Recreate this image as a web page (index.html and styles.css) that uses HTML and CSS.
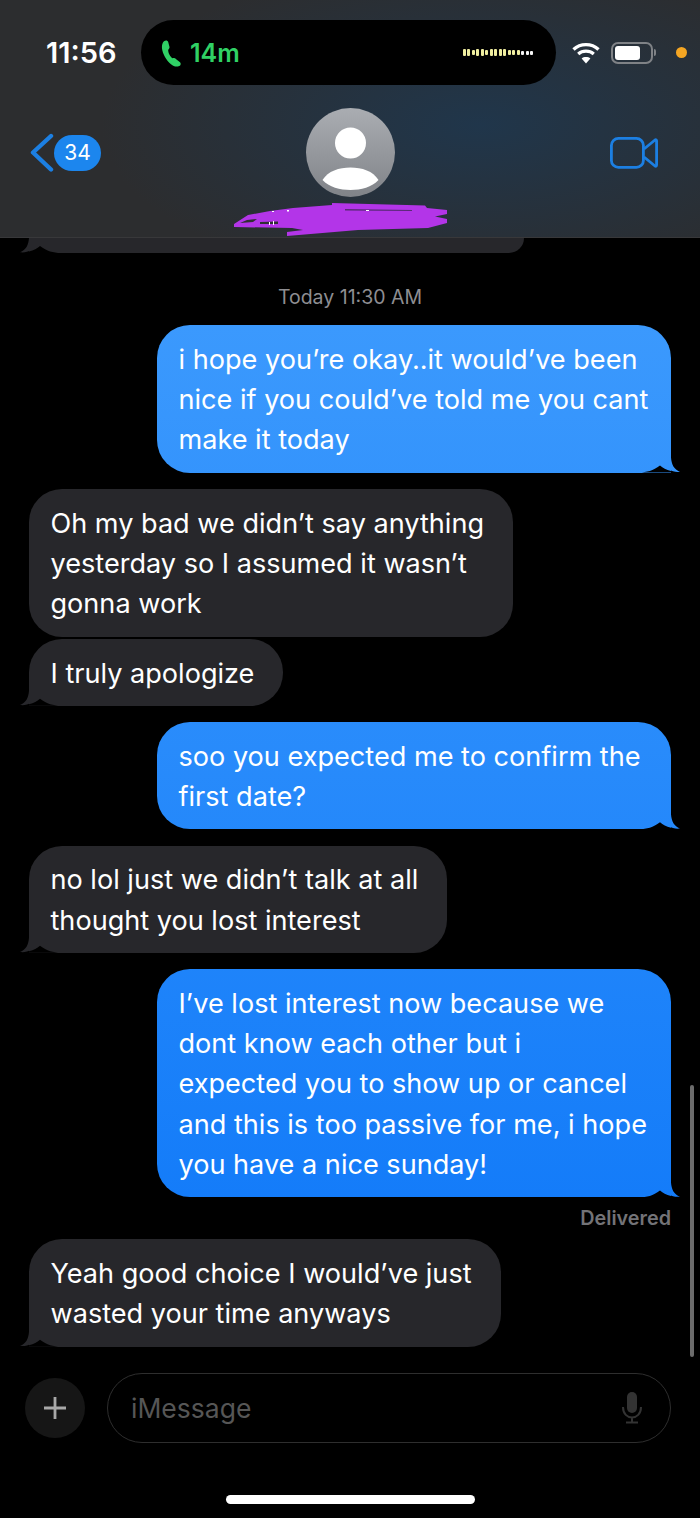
FILE: index.html
```html
<!DOCTYPE html>
<html lang="en">
<head>
  <meta charset="UTF-8">
  <title>Messages</title>
  <link rel="stylesheet" href="styles.css">
</head>
<body>

  <!-- Header -->
  <div class="header">
    <div class="status-bar">
      <div class="clock">11:56</div>
      <div class="island">
        <svg class="phone-icon" width="22" height="28" viewBox="0 0 22 28">
          <path d="M3 2.2 C4.6 1 6.6 1.2 7.2 3 L8.4 7.4 C8.8 8.8 8.2 9.8 7.2 10.8 C7 13.6 9.2 17.8 11.6 19.2 C13 18.8 14.2 19 15.2 20.2 L19 23.2 C20.2 24.6 19.8 26.2 18.2 27 C15.4 28.2 12.6 27.4 10 25.2 C5.4 21.4 1.6 14.6 1 9.4 C0.7 6.4 1.4 3.6 3 2.2 Z" fill="#30d165"/>
        </svg>
        <span class="call-time">14m</span>
        <div class="wave">
          <i class="tall"></i><i class="tall"></i><i></i><i class="tall"></i><i class="tall"></i><i></i><i class="tall"></i><i class="tall"></i><i class="tall"></i><i class="tall"></i><i></i><i></i><i></i><i class="dot"></i><i class="dot"></i><i class="dot"></i>
        </div>
      </div>
      <svg class="wifi" width="28" height="22" viewBox="0 0 28 22">
        <path d="M1.5 7.5 C8.5 1 19.5 1 26.5 7.5" fill="none" stroke="#fff" stroke-width="3.4"/>
        <path d="M6.2 12 C10.6 8.2 17.4 8.2 21.8 12" fill="none" stroke="#fff" stroke-width="3.2"/>
        <path d="M14 21.5 L9.6 16.4 C12 14.6 16 14.6 18.4 16.4 Z" fill="#fff"/>
      </svg>
      <div class="battery"><div class="battery-level"></div></div>
      <div class="battery-nub"></div>
      <div class="mic-dot"></div>
    </div>

    <div class="nav">
      <div class="back">
        <svg width="24" height="40" viewBox="0 0 24 40">
          <path d="M21 3 L3 19.5 L21 36.5" fill="none" stroke="#1c7fe2" stroke-width="4.4" stroke-linecap="round" stroke-linejoin="round"/>
        </svg>
        <div class="badge">34</div>
      </div>
      <svg class="avatar" width="89" height="89" viewBox="0 0 89 89">
        <defs>
          <linearGradient id="avatarBg" x1="0" y1="0" x2="0" y2="1">
            <stop offset="0" stop-color="#aaadb2"/>
            <stop offset="1" stop-color="#808388"/>
          </linearGradient>
        </defs>
        <circle cx="44.500" cy="44.500" r="44.500" fill="url(#avatarBg)"/>
        <circle cx="44.500" cy="35" r="15.500" fill="#fff"/>
        <path d="M16.500 72 C22 63 33 59.500 44.500 59.500 C56 59.500 67 63 72.500 72 C66 79 55 82 44.500 82 C34 82 23 79 16.500 72 Z" fill="#fff"/>
      </svg>
      <svg class="video" width="48" height="32" viewBox="0 0 48 32">
        <rect x="1.400" y="1.400" width="32" height="29" rx="7" fill="none" stroke="#1c7fe2" stroke-width="2.800"/>
        <path d="M34 12 L45 3 C46 2.400 46.600 3 46.600 4 L46.600 28 C46.600 29 46 29.600 45 29 L34 20" fill="none" stroke="#1c7fe2" stroke-width="2.800" stroke-linejoin="round"/>
      </svg>
    </div>

    <!-- scribble over the contact name -->
    <svg class="scribble" width="216" height="34" viewBox="0 0 216 34">
      <path d="M1 21 L15 12 L37 8 L60 5 L99 2 L99 0 L192 2.500 L194 5 L214 7 L214 11 L202 13.500 L214 16 L214 20 L195 25 L125 27 L54 33 L54 29 L70 27 L59 25 L1 24 Z" fill="#b335e8"/>
      <path d="M7 20 L14 17 L24 16 L20 19 Z M27 19 L45 18.500 L45 21 L27 21 Z" fill="#2f2f33"/>
      <path d="M112 6 L179 7 L179 8 L112 7.500 Z" fill="#5a2a78"/>
      <path d="M36 19 h1 v3 h-1 Z M40 18 h1 v4 h-1 Z M39 8 h2 v1 h-2 Z M54 7 h2 v1.500 h-2 Z M133 7 h3 v1 h-3 Z" fill="#fff"/>
    </svg>
  </div>

  <div class="thread">
    <div class="bubble gray tail stub"></div>

    <div class="stamp">Today 11:30 AM</div>

    <div class="bubble blue tail">i hope you’re okay..it would’ve been<br>nice if you could’ve told me you cant<br>make it today</div>

    <div class="bubble gray next-group">Oh my bad we didn’t say anything<br>yesterday so I assumed it wasn’t<br>gonna work</div>
    <div class="bubble gray tail same-group">I truly apologize</div>

    <div class="bubble blue tail next-group">soo you expected me to confirm the<br>first date?</div>

    <div class="bubble gray tail next-group">no lol just we didn’t talk at all<br>thought you lost interest</div>

    <div class="bubble blue tail next-group">I’ve lost interest now because we<br>dont know each other but i<br>expected you to show up or cancel<br>and this is too passive for me, i hope<br>you have a nice sunday!</div>
    <div class="delivered">Delivered</div>

    <div class="bubble gray tail">Yeah good choice I would’ve just<br>wasted your time anyways</div>
  </div>

  <div class="scrollbar"></div>

  <div class="composer">
    <div class="plus-btn">
      <svg width="26" height="26" viewBox="0 0 26 26">
        <path d="M13 2 V24 M2 13 H24" stroke="#a8a8a8" stroke-width="2.800"/>
      </svg>
    </div>
    <div class="input-box">
      <span class="placeholder">iMessage</span>
      <svg width="22" height="32" viewBox="0 0 22 32">
        <rect x="6" y="0" width="10" height="21" rx="5" fill="#333"/>
        <path d="M2 15 C2 29 20 29 20 15 M11 25 V30 M5 30.500 H17" fill="none" stroke="#333" stroke-width="2"/>
      </svg>
    </div>
  </div>

  <div class="home-bar"></div>

</body>
</html>
```

FILE: styles.css
```css
* {
  margin: 0;
  padding: 0;
  box-sizing: border-box;
}

html, body {
  height: 1518px;
  overflow: hidden;
}

body {
  font-family: 'Inter', 'Liberation Sans', sans-serif;
  background-color: #000;
  color: #fff;
  position: relative;
}

/* Header */
.header {
  height: 238px;
  padding-top: 20px;
  background:
    radial-gradient(ellipse 380px 165px at 480px 125px, #20364b 0%, rgba(32, 54, 75, 0) 100%),
    #2c2d2f;
  border-bottom: 1px solid #38383a;
}

.status-bar {
  display: flex;
  align-items: center;
  height: 65px;
  padding-left: 46px;
}

.clock {
  width: 95px;
  font-size: 29px;
  font-weight: 600;
}

.island {
  width: 415px;
  height: 65px;
  margin-right: 16px;
  padding: 0 23px 0 20px;
  display: flex;
  align-items: center;
  background-color: #000;
  border-radius: 33px;
}

.call-time {
  margin-left: 7px;
  font-size: 25px;
  font-weight: 600;
  color: #30d165;
}

.wave {
  margin-left: auto;
  display: flex;
  align-items: center;
  gap: 1.500px;
}

.wave i {
  display: block;
  width: 3px;
  height: 5px;
  background-color: #f0eea0;
  border-radius: 1px;
}

.wave .tall {
  height: 7px;
}

.wave .dot {
  height: 4px;
  background-color: #f4f4f4;
}

.wifi {
  margin-right: 11px;
}

.battery {
  width: 42px;
  height: 22px;
  padding: 2px;
  border: 2px solid #7f8286;
  border-radius: 7px;
}

.battery-level {
  width: 25px;
  height: 14px;
  background-color: #fff;
  border-radius: 3px;
}

.battery-nub {
  width: 2px;
  height: 7px;
  margin-left: 1px;
  background-color: #7f8286;
  border-radius: 0 2px 2px 0;
}

.mic-dot {
  width: 11px;
  height: 11px;
  margin-left: 20px;
  background-color: #f5a623;
  border-radius: 50%;
}

.nav {
  display: grid;
  grid-template-columns: 1fr auto 1fr;
  align-items: center;
  margin-top: 23px;
  padding: 0 30px;
}

.back {
  display: flex;
  align-items: center;
}

.badge {
  width: 47px;
  height: 36px;
  line-height: 36px;
  text-align: center;
  font-size: 21px;
  background-color: #1c86ee;
  border-radius: 18px;
}

.avatar {
  display: block;
}

.video {
  justify-self: end;
  margin-right: 12px;
}

.scribble {
  display: block;
  margin: 6px 0 0 233px;
}

/* Messages */
.thread {
  display: flex;
  flex-direction: column;
  padding: 0 29px;
}

.bubble {
  position: relative;
  padding: 14.600px 29px 11.800px 21.500px;
  font-size: 27.100px;
  line-height: 40.400px;
  border-radius: 33px;
  white-space: nowrap;
}

.gray {
  align-self: flex-start;
  background-color: #27272b;
}

.blue {
  align-self: flex-end;
  width: 514px;
  background-image: linear-gradient(#3b99fd 325px, #147cf9 1198px);
  background-attachment: fixed;
}

.next-group {
  margin-top: 16.300px;
}

.same-group {
  margin-top: 2.400px;
}

.stub {
  width: 495px;
  height: 15px;
  padding: 0;
  border-radius: 0 0 33px 33px;
}

.stamp {
  margin: 32px 0 16px;
  text-align: center;
  font-size: 19.500px;
  line-height: 24px;
  color: #8e8e92;
}

.delivered {
  margin: 9px 0 9px;
  text-align: right;
  font-size: 19.800px;
  font-weight: 600;
  line-height: 24px;
  color: #737377;
}

/* tail tip and the bite under its curve */
.tail::before,
.tail::after {
  content: '';
  position: absolute;
  bottom: 0;
}

.blue.tail {
  border-bottom-right-radius: 0;
}

.blue.tail::before {
  right: -10px;
  width: 12px;
  height: 15px;
  background: inherit;
  clip-path: path('M0 0 L2 0 C2.500 7 5 12 11 14.300 C7 14.800 3 14 0 12 Z');
}

.blue.tail::after {
  right: 0;
  width: 32px;
  height: 8px;
  background-color: #000;
  clip-path: path('M0 8 C8 8 14 6 21 1 C24 3.500 27 5.500 32 6.500 L32 8 Z');
}

.gray.tail {
  border-bottom-left-radius: 0;
}

.gray.tail::before {
  left: -10px;
  width: 12px;
  height: 15px;
  background: inherit;
  clip-path: path('M12 0 L10 0 C9.500 7 7 12 1 14.300 C5 14.800 9 14 12 12 Z');
}

.gray.tail::after {
  left: 0;
  width: 32px;
  height: 8px;
  background-color: #000;
  clip-path: path('M32 8 C24 8 18 6 11 1 C8 3.500 5 5.500 0 6.500 L0 8 Z');
}

.scrollbar {
  position: absolute;
  top: 1085px;
  left: 690px;
  width: 4px;
  height: 272px;
  background-color: #6c6c6c;
  border-radius: 2px;
}

/* Composer */
.composer {
  display: flex;
  align-items: center;
  gap: 22px;
  margin-top: 26px;
  padding: 0 29px 0 25px;
}

.plus-btn {
  width: 60px;
  height: 60px;
  display: flex;
  align-items: center;
  justify-content: center;
  background-color: #161616;
  border-radius: 50%;
}

.input-box {
  flex: 1;
  height: 70px;
  padding: 0 27px 0 23px;
  display: flex;
  align-items: center;
  justify-content: space-between;
  border: 1.500px solid #2e2e2e;
  border-radius: 35px;
}

.placeholder {
  font-size: 26.500px;
  color: #565656;
}

.home-bar {
  width: 249px;
  height: 9px;
  margin: 52px auto 0;
  background-color: #fff;
  border-radius: 5px;
}
```
